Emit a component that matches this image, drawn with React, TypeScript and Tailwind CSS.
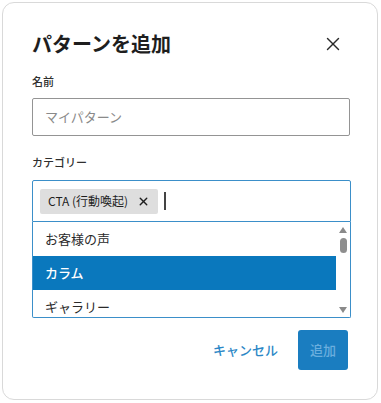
import { X } from "lucide-react";

const OPTIONS = ["お客様の声", "カラム", "ギャラリー"];

export default function App() {
  return (
    <div
      className="h-[403px] w-[381px] bg-white p-[2px]"
      style={{ fontFamily: '"Noto Sans CJK JP", "Noto Sans", sans-serif' }}
    >
      <div className="h-[398px] w-[376px] rounded-[12px] border border-[#d9d9d9] bg-white px-[29px] pt-[24px]">
        <header className="flex items-center justify-between">
          <h1 className="text-[20px] font-bold leading-[34px] text-[#1e1e1e]">
            パターンを追加
          </h1>
          <X className="mr-[4px] h-[22px] w-[22px] text-[#2a2a2a]" strokeWidth={1.5} />
        </header>

        <label className="mt-[12px] block text-[11px] font-medium leading-[16px] text-[#2f2f2f]">
          名前
        </label>
        <div className="mt-[9px] flex h-[38px] w-[318px] items-center rounded-[2px] border border-[#949494] px-[12px] text-[13px] text-[#8a8a8a]">
          マイパターン
        </div>

        <label className="mt-[18px] block text-[11px] font-medium leading-[16px] text-[#2f2f2f]">
          カテゴリー
        </label>
        <div className="mt-[10px] w-[319px]">
          <div className="flex h-[42px] items-center gap-[6px] rounded-t-[2px] border-[1.5px] border-[#3b8fc9] px-[7px]">
            <span className="flex h-[25px] items-center gap-[9px] rounded-[2px] bg-[#dedede] pl-[8px] pr-[8px] text-[12px] text-[#1e1e1e]">
              CTA (行動喚起)
              <X className="h-[13px] w-[13px]" strokeWidth={2.5} />
            </span>
            <span className="h-[18px] w-[1.5px] bg-[#444]" />
          </div>
          <div className="flex h-[96px] overflow-hidden rounded-b-[2px] border-[1.5px] border-t-0 border-[#3b8fc9]">
            <ul className="flex-1">
              {OPTIONS.map((o, i) => (
                <li
                  key={o}
                  className={
                    i === 1
                      ? "flex h-[34px] items-center bg-[#0a78bd] px-[12px] text-[13px] font-medium text-white"
                      : "flex h-[34px] items-center px-[12px] text-[13px] text-[#2a2a2a]"
                  }
                >
                  {o}
                </li>
              ))}
            </ul>
            <div className="flex w-[14px] flex-col items-center pt-[4px] pb-[4px]">
              <svg width="8" height="6" viewBox="0 0 8 6" className="mt-[1px]">
                <path d="M4 0 L8 6 L0 6 Z" fill="#8a8a8a" />
              </svg>
              <div className="mt-[5px] h-[15px] w-[7px] rounded-full bg-[#8e8e8e]" />
              <div className="flex-1" />
              <svg width="8" height="6" viewBox="0 0 8 6">
                <path d="M0 0 L8 0 L4 6 Z" fill="#8a8a8a" />
              </svg>
            </div>
          </div>
        </div>

        <footer className="mt-[12px] flex items-center justify-end gap-[20px]">
          <button className="text-[13px] font-medium text-[#2b87c6]">キャンセル</button>
          <button className="h-[40px] w-[50px] rounded-[3px] bg-[#1a7dc0] text-[13px] font-medium text-[#6aaede]">
            追加
          </button>
        </footer>
      </div>
    </div>
  );
}
